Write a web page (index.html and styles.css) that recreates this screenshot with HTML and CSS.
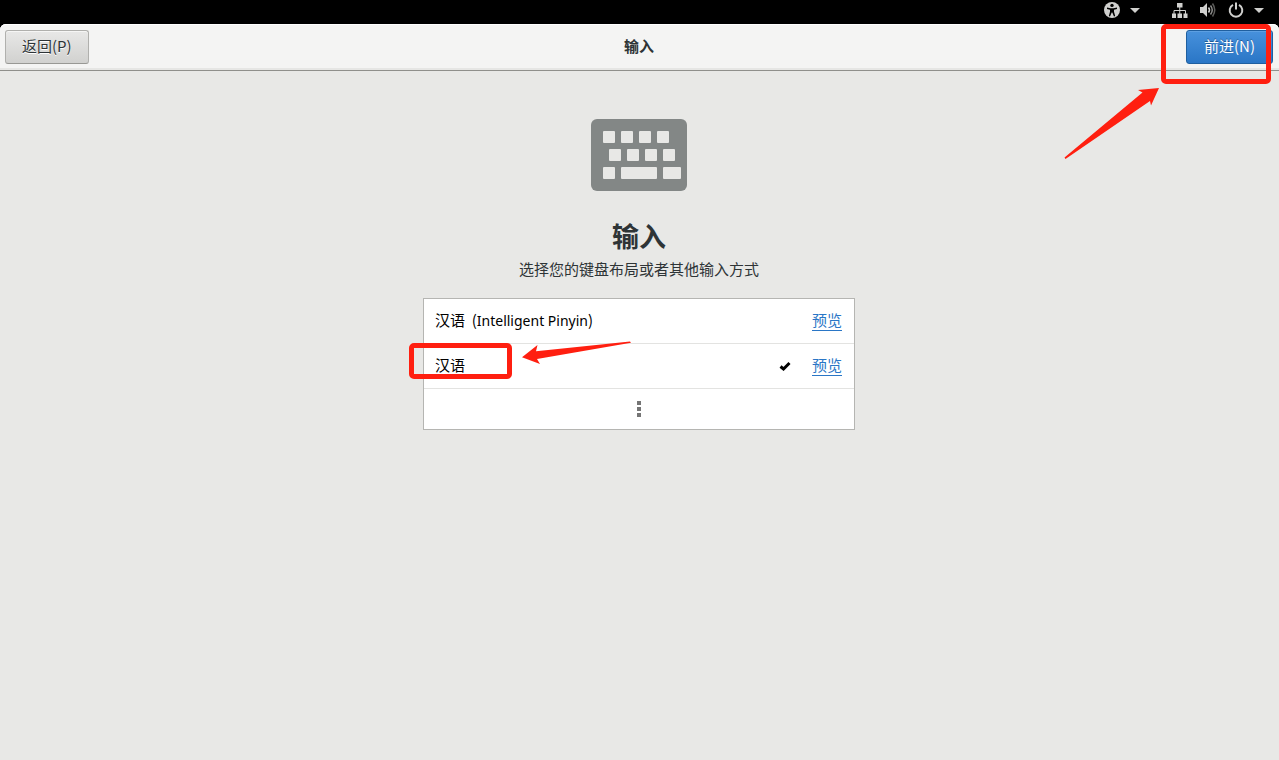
FILE: index.html
```
<!DOCTYPE html>
<html lang="zh-CN">
<head>
    <meta charset="UTF-8">
    <meta name="viewport" content="width=device-width, initial-scale=1.0">
    <title>输入</title>
    <link rel="stylesheet" href="styles.css">
</head>

<body>
    <div class="top-bar">
        <button class="status-menu" type="button" aria-label="辅助功能">
            <svg width="16" height="16" viewBox="0 0 16 16">
                <circle cx="8" cy="8" r="8" fill="#d0d0ce"/>
                <circle cx="8" cy="3.4" r="1.7" fill="#000"/>
                <path d="M3 5.6 6.5 6.2h3L13 5.6v1.3l-3 .8v2l1.2 4.3-1.2.4L8.3 10.6h-.6L6 14.4l-1.200-.4L6 9.7v-2l-3-.8z" fill="#000"/>
            </svg>
            <svg class="caret" width="10" height="5" viewBox="0 0 10 5"><path d="M0 0h10L5 5z" fill="#d0d0ce"/></svg>
        </button>
        <button class="status-menu system" type="button" aria-label="系统">
            <svg width="16" height="16" viewBox="0 0 16 16">
                <path d="M5 1h5.500v4.500H5zM0 11.500h4v4.500H0zM5.500 11.500h4.500v4.500H5.500zM11.500 11.500h4v4.500h-4z" fill="#d0d0ce"/>
                <path d="M7.750 5v7M2 12V8.500h11.500V12" fill="none" stroke="#d0d0ce"/>
            </svg>
            <svg width="16" height="16" viewBox="0 0 16 16">
                <path d="M0 5h3l4-4v14l-4-4H0z" fill="#d0d0ce"/>
                <path d="M8.500 5.500q2 2.500 0 5" fill="none" stroke="#d0d0ce" stroke-width="1.500"/>
                <path d="M10.500 3.500q3.500 4.500 0 9" fill="none" stroke="#8c8c8a" stroke-width="1.500"/>
                <path d="M12.500 1.500q4.500 6.500 0 13" fill="none" stroke="#5c5c5a" stroke-width="1.500"/>
            </svg>
            <svg width="16" height="16" viewBox="0 0 16 16">
                <path d="M5 2.800a6.300 6.300 0 1 0 6 0M8 0.500v7" fill="none" stroke="#d0d0ce" stroke-width="2"/>
            </svg>
            <svg class="caret" width="10" height="5" viewBox="0 0 10 5"><path d="M0 0h10L5 5z" fill="#d0d0ce"/></svg>
        </button>
    </div>

    <div class="window">
        <header class="header-bar">
            <button class="btn" type="button">返回(P)</button>
            <div class="title">输入</div>
            <div class="next">
                <button class="btn btn-primary" type="button">前进(N)</button>
                <div class="mark mark-next"></div>
                <svg class="arrow arrow-next" width="96" height="72" viewBox="0 0 96 72">
                    <path d="M.5 70.500 78.500 5.500 74 3 95 1 87 18.500 86 14 1.500 72z" fill="#ff1f10"/>
                </svg>
            </div>
        </header>

        <main class="page">
            <svg class="keyboard" width="96" height="72" viewBox="0 0 96 72">
                <rect width="96" height="72" rx="6" fill="#838786"/>
                <g fill="#e8e8e6">
                    <rect x="12" y="12" width="12" height="12" rx="1"/>
                    <rect x="30" y="12" width="12" height="12" rx="1"/>
                    <rect x="48" y="12" width="12" height="12" rx="1"/>
                    <rect x="66" y="12" width="12" height="12" rx="1"/>
                    <rect x="18" y="30" width="12" height="12" rx="1"/>
                    <rect x="36" y="30" width="12" height="12" rx="1"/>
                    <rect x="54" y="30" width="12" height="12" rx="1"/>
                    <rect x="72" y="30" width="12" height="12" rx="1"/>
                    <rect x="12" y="48" width="12" height="12" rx="1"/>
                    <rect x="30" y="48" width="36" height="12" rx="1"/>
                    <rect x="72" y="48" width="18" height="12" rx="1"/>
                </g>
            </svg>
            <h1>输入</h1>
            <p class="subtitle">选择您的键盘布局或者其他输入方式</p>

            <ul class="input-list">
                <li class="row">
                    <span class="name">汉语&nbsp; (<span class="latin">Intelligent Pinyin</span>)</span>
                    <a class="preview" href="#">预览</a>
                </li>
                <li class="row selected">
                    <span class="name">汉语</span>
                    <svg class="check" width="12" height="10" viewBox="0 0 12 10">
                        <path d="M1.500 5.500 4.500 8 10.500 2" fill="none" stroke="#000" stroke-width="3"/>
                    </svg>
                    <a class="preview" href="#">预览</a>
                    <div class="mark mark-row"></div>
                    <svg class="arrow arrow-row" width="110" height="24" viewBox="0 0 110 24">
                        <path d="M0 16.300 15.500 4 14 10.300 108 .5 109 1.700 15 18 18 23z" fill="#ff1f10"/>
                    </svg>
                </li>
                <li class="row-more">
                    <button class="more" type="button" aria-label="更多">
                        <svg width="4" height="16" viewBox="0 0 4 16"><path d="M0 0h4v4H0zM0 6h4v4H0zM0 12h4v4H0z" fill="#757575"/></svg>
                    </button>
                </li>
            </ul>
        </main>
    </div>
</body>
</html>
```
FILE: styles.css
```
* {
    box-sizing: border-box;
}
body {
    margin: 0;
    min-height: 100vh;
    display: flex;
    flex-direction: column;
    background-color: #000;
    color: #2e3436;
    font-family: "Noto Sans", "Noto Sans CJK SC", sans-serif;
    font-size: 15px;
    line-height: 22px;
}
svg {
    display: block;
}
button {
    font: inherit;
    cursor: pointer;
}

/* top bar */
.top-bar {
    display: flex;
    justify-content: flex-end;
    gap: 32px;
    height: 24px;
    padding: 2px 15px 6px 0;
}
.status-menu {
    display: flex;
    align-items: center;
    gap: 10px;
    padding: 0;
    border: none;
    background: none;
}
.system {
    gap: 12px;
}
.system .caret {
    margin-left: -2px;
}

/* window */
.window {
    flex: 1;
    background-color: #e8e8e6;
    border-radius: 6px 6px 0 0;
}
.header-bar {
    display: grid;
    grid-template-columns: 1fr auto 1fr;
    align-items: center;
    height: 47px;
    padding: 0 6px 0 5px;
    background-color: #f4f4f3;
    border-bottom: 1px solid #8f8f8b;
    border-radius: 6px 6px 0 0;
    box-shadow: inset 0 1px #fff, inset 0 -2px #e6e6e4;
}
.title {
    padding-bottom: 2px;
    font-weight: bold;
}
.btn {
    justify-self: start;
    height: 34px;
    padding: 0 16px 2px;
    border: 1px solid #b0b0ad;
    border-bottom-color: #989894;
    border-radius: 3px;
    background: linear-gradient(#e8e8e7, #d1d1cf);
    box-shadow: inset 0 1px #f6f6f5;
    color: #2e3436;
    font-family: "Noto Sans CJK SC", sans-serif;
    text-shadow: 0 1px #fff;
}
.btn-primary {
    padding: 0 17px 2px;
    border-color: #1f5f9f;
    background: linear-gradient(#4791dc, #2a76c6);
    box-shadow: inset 0 1px #5c9fe2;
    color: #fff;
    text-shadow: 0 -1px #1f5b99;
}
.next {
    position: relative;
    justify-self: end;
}

/* page */
.page {
    display: flex;
    flex-direction: column;
    align-items: center;
    padding: 48px 17px 48px 16px;
}
h1 {
    margin: 26px 0 1px;
    font-size: 27px;
    line-height: 40px;
}
.subtitle {
    margin: 0;
}
.input-list {
    width: 100%;
    max-width: 432px;
    margin: 18px 0 0;
    padding: 0;
    list-style: none;
    background-color: #fff;
    border: 1px solid #b5b5b2;
}
.row {
    position: relative;
    display: flex;
    align-items: center;
    gap: 21px;
    height: 45px;
    padding: 0 12px 2px 11px;
    border-bottom: 1px solid #e3e3e1;
    color: #000;
}
.name {
    flex: 1;
    font-family: "Noto Sans CJK SC", sans-serif;
}
.latin {
    font-family: "Noto Sans", sans-serif;
    font-size: 14px;
}
.check {
    margin-top: 2px;
}
.preview {
    color: #2a76c6;
    line-height: 20px;
    text-decoration: none;
    border-bottom: 1px solid #2a76c6;
}
.row-more {
    display: flex;
    justify-content: center;
}
.more {
    padding: 12px 16px;
    border: none;
    background: none;
}

/* red marks */
.mark {
    position: absolute;
    border: 5px solid #ff1f10;
    border-radius: 5px;
    pointer-events: none;
}
.mark-next {
    top: -6px;
    right: 2px;
    bottom: -20px;
    left: -25px;
}
.mark-row {
    top: -1px;
    left: -15px;
    width: 103px;
    height: 36px;
}
.arrow {
    position: absolute;
    pointer-events: none;
}
.arrow-next {
    top: 57px;
    right: 113px;
}
.arrow-row {
    top: -3px;
    left: 98px;
}
```
